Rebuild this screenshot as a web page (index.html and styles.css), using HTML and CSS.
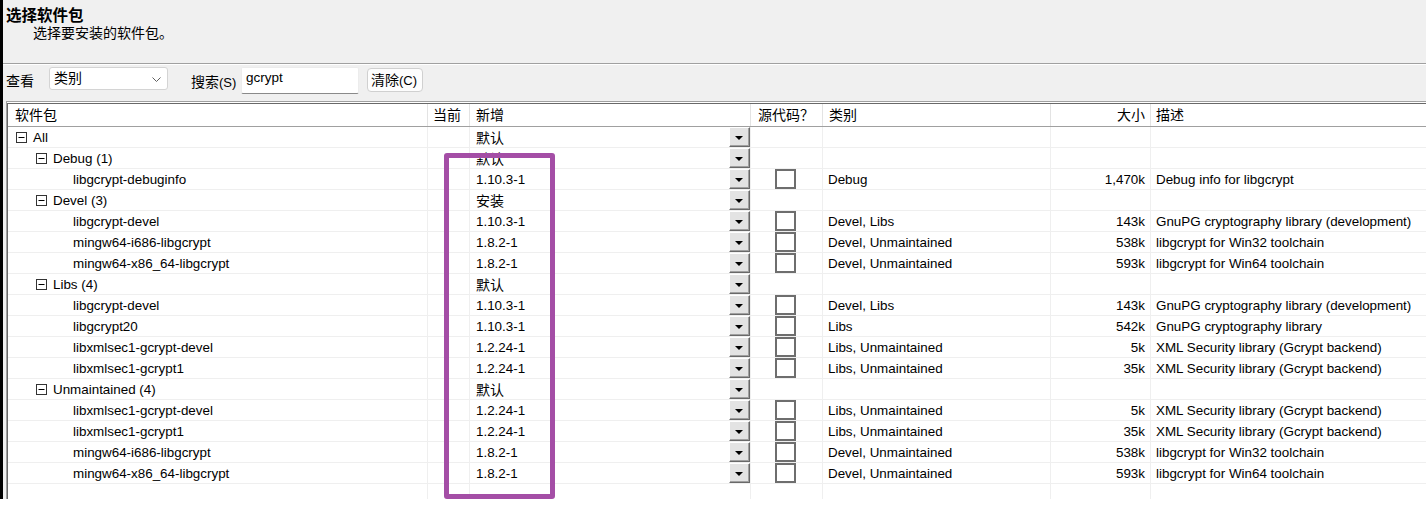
FILE: index.html
```html
<!DOCTYPE html>
<html lang="zh-CN">
<head>
<meta charset="utf-8">
<title>选择软件包</title>
<link rel="stylesheet" href="styles.css">
</head>
<body>
<div class="window">
  <div class="header">
    <div class="title">选择软件包</div>
    <div class="subtitle">选择要安装的软件包。</div>
  </div>
  <div class="toolbar">
    <span class="lbl lbl-view">查看</span>
    <div class="combo"><span>类别</span><svg class="chev" width="9" height="5" viewBox="0 0 9 5"><polyline points="0.5,0.5 4.5,4.5 8.5,0.5" fill="none" stroke="#5f5f5f" stroke-width="1"/></svg></div>
    <span class="lbl lbl-search">搜索<span class="acc">(S)</span></span>
    <div class="search">gcrypt</div>
    <div class="btn">清除<span class="acc">(C)</span></div>
  </div>
  <div class="tablebox">
    <div class="tableinner">
      <div class="row head">
        <div class="c c-name">软件包</div>
        <div class="c c-cur">当前</div>
        <div class="c c-new">新增</div>
        <div class="c c-src">源代码？</div>
        <div class="c c-cat">类别</div>
        <div class="c c-size">大小</div>
        <div class="c c-desc">描述</div>
      </div>

      <div class="row">
        <div class="c c-name lvl0"><svg class="exp" width="11" height="11" viewBox="0 0 11 11"><rect x="0.5" y="0.5" width="10" height="10" fill="#fff" stroke="#333"/><line x1="2.5" y1="5.5" x2="8.5" y2="5.5" stroke="#000"/></svg>All</div>
        <div class="c c-cur"></div>
        <div class="c c-new"><span class="v cjk">默认</span><span class="dd"><i class="tri"></i></span></div>
        <div class="c c-src"></div><div class="c c-cat"></div><div class="c c-size"></div><div class="c c-desc"></div>
      </div>
      <div class="row">
        <div class="c c-name lvl1"><svg class="exp" width="11" height="11" viewBox="0 0 11 11"><rect x="0.5" y="0.5" width="10" height="10" fill="#fff" stroke="#333"/><line x1="2.5" y1="5.5" x2="8.5" y2="5.5" stroke="#000"/></svg>Debug (1)</div>
        <div class="c c-cur"></div>
        <div class="c c-new"><span class="v cjk">默认</span><span class="dd"><i class="tri"></i></span></div>
        <div class="c c-src"></div><div class="c c-cat"></div><div class="c c-size"></div><div class="c c-desc"></div>
      </div>
      <div class="row">
        <div class="c c-name lvl2">libgcrypt-debuginfo</div>
        <div class="c c-cur"></div>
        <div class="c c-new"><span class="v">1.10.3-1</span><span class="dd"><i class="tri"></i></span></div>
        <div class="c c-src"><span class="chk"></span></div><div class="c c-cat">Debug</div><div class="c c-size">1,470k</div><div class="c c-desc">Debug info for libgcrypt</div>
      </div>
      <div class="row">
        <div class="c c-name lvl1"><svg class="exp" width="11" height="11" viewBox="0 0 11 11"><rect x="0.5" y="0.5" width="10" height="10" fill="#fff" stroke="#333"/><line x1="2.5" y1="5.5" x2="8.5" y2="5.5" stroke="#000"/></svg>Devel (3)</div>
        <div class="c c-cur"></div>
        <div class="c c-new"><span class="v cjk">安装</span><span class="dd"><i class="tri"></i></span></div>
        <div class="c c-src"></div><div class="c c-cat"></div><div class="c c-size"></div><div class="c c-desc"></div>
      </div>
      <div class="row">
        <div class="c c-name lvl2">libgcrypt-devel</div>
        <div class="c c-cur"></div>
        <div class="c c-new"><span class="v">1.10.3-1</span><span class="dd"><i class="tri"></i></span></div>
        <div class="c c-src"><span class="chk"></span></div><div class="c c-cat">Devel, Libs</div><div class="c c-size">143k</div><div class="c c-desc">GnuPG cryptography library (development)</div>
      </div>
      <div class="row">
        <div class="c c-name lvl2">mingw64-i686-libgcrypt</div>
        <div class="c c-cur"></div>
        <div class="c c-new"><span class="v">1.8.2-1</span><span class="dd"><i class="tri"></i></span></div>
        <div class="c c-src"><span class="chk"></span></div><div class="c c-cat">Devel, Unmaintained</div><div class="c c-size">538k</div><div class="c c-desc">libgcrypt for Win32 toolchain</div>
      </div>
      <div class="row">
        <div class="c c-name lvl2">mingw64-x86_64-libgcrypt</div>
        <div class="c c-cur"></div>
        <div class="c c-new"><span class="v">1.8.2-1</span><span class="dd"><i class="tri"></i></span></div>
        <div class="c c-src"><span class="chk"></span></div><div class="c c-cat">Devel, Unmaintained</div><div class="c c-size">593k</div><div class="c c-desc">libgcrypt for Win64 toolchain</div>
      </div>
      <div class="row">
        <div class="c c-name lvl1"><svg class="exp" width="11" height="11" viewBox="0 0 11 11"><rect x="0.5" y="0.5" width="10" height="10" fill="#fff" stroke="#333"/><line x1="2.5" y1="5.5" x2="8.5" y2="5.5" stroke="#000"/></svg>Libs (4)</div>
        <div class="c c-cur"></div>
        <div class="c c-new"><span class="v cjk">默认</span><span class="dd"><i class="tri"></i></span></div>
        <div class="c c-src"></div><div class="c c-cat"></div><div class="c c-size"></div><div class="c c-desc"></div>
      </div>
      <div class="row">
        <div class="c c-name lvl2">libgcrypt-devel</div>
        <div class="c c-cur"></div>
        <div class="c c-new"><span class="v">1.10.3-1</span><span class="dd"><i class="tri"></i></span></div>
        <div class="c c-src"><span class="chk"></span></div><div class="c c-cat">Devel, Libs</div><div class="c c-size">143k</div><div class="c c-desc">GnuPG cryptography library (development)</div>
      </div>
      <div class="row">
        <div class="c c-name lvl2">libgcrypt20</div>
        <div class="c c-cur"></div>
        <div class="c c-new"><span class="v">1.10.3-1</span><span class="dd"><i class="tri"></i></span></div>
        <div class="c c-src"><span class="chk"></span></div><div class="c c-cat">Libs</div><div class="c c-size">542k</div><div class="c c-desc">GnuPG cryptography library</div>
      </div>
      <div class="row">
        <div class="c c-name lvl2">libxmlsec1-gcrypt-devel</div>
        <div class="c c-cur"></div>
        <div class="c c-new"><span class="v">1.2.24-1</span><span class="dd"><i class="tri"></i></span></div>
        <div class="c c-src"><span class="chk"></span></div><div class="c c-cat">Libs, Unmaintained</div><div class="c c-size">5k</div><div class="c c-desc">XML Security library (Gcrypt backend)</div>
      </div>
      <div class="row">
        <div class="c c-name lvl2">libxmlsec1-gcrypt1</div>
        <div class="c c-cur"></div>
        <div class="c c-new"><span class="v">1.2.24-1</span><span class="dd"><i class="tri"></i></span></div>
        <div class="c c-src"><span class="chk"></span></div><div class="c c-cat">Libs, Unmaintained</div><div class="c c-size">35k</div><div class="c c-desc">XML Security library (Gcrypt backend)</div>
      </div>
      <div class="row">
        <div class="c c-name lvl1"><svg class="exp" width="11" height="11" viewBox="0 0 11 11"><rect x="0.5" y="0.5" width="10" height="10" fill="#fff" stroke="#333"/><line x1="2.5" y1="5.5" x2="8.5" y2="5.5" stroke="#000"/></svg>Unmaintained (4)</div>
        <div class="c c-cur"></div>
        <div class="c c-new"><span class="v cjk">默认</span><span class="dd"><i class="tri"></i></span></div>
        <div class="c c-src"></div><div class="c c-cat"></div><div class="c c-size"></div><div class="c c-desc"></div>
      </div>
      <div class="row">
        <div class="c c-name lvl2">libxmlsec1-gcrypt-devel</div>
        <div class="c c-cur"></div>
        <div class="c c-new"><span class="v">1.2.24-1</span><span class="dd"><i class="tri"></i></span></div>
        <div class="c c-src"><span class="chk"></span></div><div class="c c-cat">Libs, Unmaintained</div><div class="c c-size">5k</div><div class="c c-desc">XML Security library (Gcrypt backend)</div>
      </div>
      <div class="row">
        <div class="c c-name lvl2">libxmlsec1-gcrypt1</div>
        <div class="c c-cur"></div>
        <div class="c c-new"><span class="v">1.2.24-1</span><span class="dd"><i class="tri"></i></span></div>
        <div class="c c-src"><span class="chk"></span></div><div class="c c-cat">Libs, Unmaintained</div><div class="c c-size">35k</div><div class="c c-desc">XML Security library (Gcrypt backend)</div>
      </div>
      <div class="row">
        <div class="c c-name lvl2">mingw64-i686-libgcrypt</div>
        <div class="c c-cur"></div>
        <div class="c c-new"><span class="v">1.8.2-1</span><span class="dd"><i class="tri"></i></span></div>
        <div class="c c-src"><span class="chk"></span></div><div class="c c-cat">Devel, Unmaintained</div><div class="c c-size">538k</div><div class="c c-desc">libgcrypt for Win32 toolchain</div>
      </div>
      <div class="row">
        <div class="c c-name lvl2">mingw64-x86_64-libgcrypt</div>
        <div class="c c-cur"></div>
        <div class="c c-new"><span class="v">1.8.2-1</span><span class="dd"><i class="tri"></i></span></div>
        <div class="c c-src"><span class="chk"></span></div><div class="c c-cat">Devel, Unmaintained</div><div class="c c-size">593k</div><div class="c c-desc">libgcrypt for Win64 toolchain</div>
      </div>
      <div class="row empty">
        <div class="c c-name"></div><div class="c c-cur"></div><div class="c c-new"></div><div class="c c-src"></div><div class="c c-cat"></div><div class="c c-size"></div><div class="c c-desc"></div>
      </div>
    </div>
  </div>
</div>
<div class="highlight"></div>
</body>
</html>
```

FILE: styles.css
```css
* { box-sizing: border-box; }
html, body { margin: 0; padding: 0; }
body {
  width: 1426px;
  height: 507px;
  overflow: hidden;
  background: #fff;
  font-family: "Liberation Sans", "Noto Sans CJK SC", sans-serif;
  color: #000;
  position: relative;
}
.window {
  height: 499px;
  border-left: 3px solid #000;
  background: #f0f0f0;
  overflow: hidden;
}
.header {
  height: 64px;
  border-bottom: 1px solid #a0a0a0;
  padding: 5px 0 0 3px;
  font-family: "Noto Sans CJK SC", sans-serif;
}
.title {
  font-size: 15.5px;
  font-weight: bold;
  line-height: 18px;
}
.subtitle {
  font-size: 14px;
  line-height: 18px;
  padding-left: 27px;
}
.toolbar {
  height: 37px;
  border-top: 1px solid #fff;
  display: flex;
  align-items: flex-start;
  padding-left: 3px;
  font-family: "Noto Sans CJK SC", sans-serif;
  font-size: 14px;
}
.lbl { line-height: 20px; }
.lbl-view { margin-top: 5px; width: 43px; }
.lbl-search { margin-top: 6px; margin-left: 23px; width: 50px; }
.acc { font-family: "Liberation Sans", sans-serif; font-size: 13px; }
.combo {
  margin-top: 2px;
  width: 119px;
  height: 23px;
  background: #fff;
  border: 1px solid #d4d4d4;
  border-radius: 3px;
  display: flex;
  align-items: center;
  justify-content: space-between;
  padding: 0 6px 0 4px;
  line-height: 18px;
}
.combo span { margin-top: -3px; }
.chev { margin-top: 1px; }
.search {
  margin-top: 2px;
  width: 118px;
  height: 27px;
  background: #fff;
  border: 1px solid #ececec;
  border-bottom: 1px solid #8a8a8a;
  border-radius: 2px;
  font-family: "Liberation Sans", sans-serif;
  font-size: 13.5px;
  line-height: 18px;
  padding: 1px 0 0 4px;
}
.btn {
  margin-top: 3px;
  margin-left: 8px;
  width: 56px;
  height: 24px;
  background: #fdfdfd;
  border: 1px solid #d0d0d0;
  border-radius: 4px;
  line-height: 21px;
  padding-left: 3px;
}
.tablebox {
  margin-left: 3px;
  border-top: 1px solid #a0a0a0;
  border-left: 1px solid #a0a0a0;
  height: 400px;
  background: #fff;
}
.tableinner {
  margin-top: 1px;
  border-top: 1px solid #696969;
  border-left: 1px solid #696969;
  height: 100%;
  background: #fff;
}
.row {
  display: grid;
  grid-template-columns: 420px 42px 281px 72px 228px 100px 1fr;
  height: 21px;
  border-bottom: 1px solid #efefef;
  font-size: 13.4px;
  line-height: 22px;
}
.row.head {
  height: 23px;
  border-bottom: 1px solid #a0a0a0;
  font-family: "Noto Sans CJK SC", sans-serif;
  font-size: 14px;
  line-height: 21px;
}
.row.empty { border-bottom: none; height: 20px; }
.c {
  border-right: 1px solid #efefef;
  white-space: nowrap;
  overflow: hidden;
  height: 100%;
}
.head .c { border-right-color: #e3e3e3; }
.c-name { padding-left: 7px; display: flex; align-items: flex-start; }
.head .c-name { display: block; }
.c-cur { padding-left: 5px; }
.c-new { padding-left: 6px; display: flex; }
.head .c-new { display: block; }
.c-cat { padding-left: 5px; }
.c-size { text-align: right; padding-right: 5px; }
.c-desc { padding-left: 5px; border-right: none; }
.head .c-cat { padding-left: 6px; }
.lvl0 { padding-left: 8px; }
.lvl1 { padding-left: 28px; }
.lvl2 { padding-left: 65px; }
.exp { flex: none; margin-right: 6px; margin-top: 5px; }
.v { flex: 1; }
.cjk { font-family: "Noto Sans CJK SC", sans-serif; font-size: 14px; line-height: 20px; }
.dd {
  flex: none;
  width: 21px;
  height: 20px;
  background: #e3e3e3;
  border-top: 1px solid #fff;
  border-left: 1px solid #fff;
  border-right: 1px solid #696969;
  border-bottom: 1px solid #696969;
  box-shadow: inset -1px -1px 0 #a0a0a0;
  display: flex;
  align-items: center;
  justify-content: center;
}
.tri {
  display: block;
  width: 0;
  height: 0;
  border-left: 4px solid transparent;
  border-right: 4px solid transparent;
  border-top: 4px solid #000;
  margin-top: 2px;
  margin-left: -1px;
}
.c-src { padding-left: 24px; }
.head .c-src { padding-left: 7px; }
.chk {
  display: block;
  width: 21px;
  height: 20px;
  border: 2px solid #6e6e6e;
  background: #fff;
}
.highlight {
  position: absolute;
  left: 444px;
  top: 153px;
  width: 111px;
  height: 346px;
  border: 5px solid #a44ea6;
  border-radius: 3px;
}
```
